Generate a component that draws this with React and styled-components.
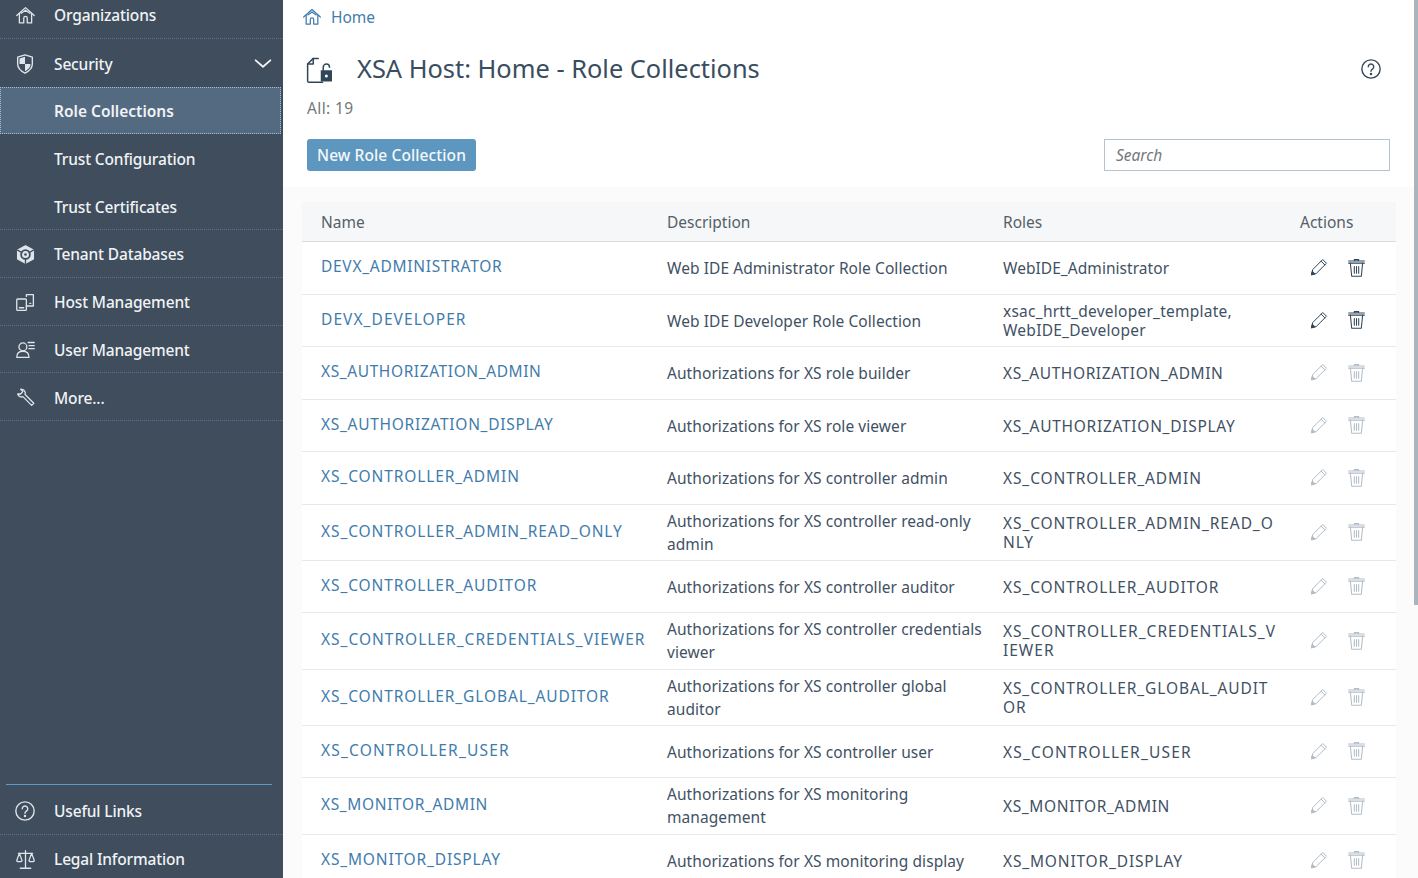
import styled, { createGlobalStyle } from "styled-components";

const GlobalStyle = createGlobalStyle`
  html, body { margin: 0; padding: 0; height: 100%; overflow: hidden; background: #fff; }
  body { font-family: "Noto Sans", "Open Sans", "Liberation Sans", sans-serif; }
`;

const Page = styled.div`
  display: flex;
  width: 1418px;
  height: 878px;
  overflow: hidden;
  position: relative;
`;

const Sidebar = styled.aside`
  width: 283px;
  flex: none;
  height: 878px;
  overflow: hidden;
  background: #3f4d5d;
  display: flex;
  flex-direction: column;
`;

const NavList = styled.nav`
  display: flex;
  flex-direction: column;
  margin-top: -9px;
  & > div { padding-top: 2px; }
`;

const NavItem = styled.div`
  height: 47.8px;
  flex: none;
  box-sizing: border-box;
  display: flex;
  align-items: center;
  padding: 0 9px 0 ${(p) => (p.$sub ? "54px" : "14px")};
  color: #f0f3f5;
  font-size: 15.5px;
  font-weight: ${(p) => (p.$active ? 600 : 500)};
  letter-spacing: ${(p) => (p.$active ? "0" : "-0.15px")};
  border-bottom: 1px ${(p) => (p.$plain ? "none" : "dotted")} #5d7186;
  background: ${(p) => (p.$active ? "#546a81" : "transparent")};
  outline: ${(p) => (p.$active ? "1px dotted #9fc0dc" : "none")};
  outline-offset: -1px;
  margin-right: ${(p) => (p.$active ? "2px" : "0")};
`;

const NavIcon = styled.span`
  width: 24px;
  height: 24px;
  margin-right: 16px;
  margin-left: -1px;
  display: flex;
  align-items: center;
  justify-content: center;
  color: #dfe5ea;
  flex: none;
  & + span { margin-left: 1px; }
`;

const NavLabel = styled.span`
  flex: 1;
`;

const NavFooter = styled.div`
  margin-top: auto;
  margin-bottom: -5px;
  display: flex;
  flex-direction: column;
`;

const FooterRule = styled.div`
  height: 1px;
  margin: 0 11px 2px 6px;
  background: #5a9bc9;
`;

const Main = styled.main`
  flex: 1;
  min-width: 0;
  height: 878px;
  display: flex;
  flex-direction: column;
  & > * { flex: none; }
`;

const Breadcrumb = styled.div`
  display: flex;
  align-items: center;
  height: 34px;
  padding-left: 19px;
  color: #427cac;
  font-size: 15.5px;
  gap: 9px;
`;

const TitleRow = styled.div`
  display: flex;
  align-items: center;
  height: 36px;
  margin-top: 17px;
  padding: 0 36px 0 19px;
  color: #32465a;
`;

const Title = styled.h1`
  margin: 0 0 2px 25px;
  flex: 1;
  font-size: 25.4px;
  font-weight: 400;
  color: #3a4d60;
`;

const Count = styled.div`
  margin: 9px 0 0 24px;
  height: 24px;
  line-height: 24px;
  color: #74777a;
  font-size: 15.5px;
  letter-spacing: 0.4px;
`;

const Toolbar = styled.div`
  display: flex;
  align-items: center;
  justify-content: space-between;
  margin-top: 19px;
  padding: 0 28px 0 24px;
  height: 32px;
`;

const PrimaryButton = styled.button`
  height: 32px;
  padding: 0;
  width: 169px;
  border: none;
  border-radius: 3px;
  background: #5d97bf;
  color: #f4f7f9;
  font: 500 15.5px "Noto Sans", sans-serif;
  letter-spacing: 0.1px;
  white-space: nowrap;
`;

const SearchBox = styled.div`
  box-sizing: border-box;
  width: 286px;
  height: 32px;
  border: 1px solid #b5c4d0;
  padding-left: 11px;
  display: flex;
  align-items: center;
  font-size: 15.5px;
  font-style: italic;
  color: #74777a;
`;

const TableArea = styled.section`
  margin-top: 16px;
  padding: 15px 22px 0 19px;
  background: #fbfbfb;
  font-size: 15.5px;
  color: #3f5164;
`;

const Row = styled.div`
  display: grid;
  grid-template-columns: 365px 336px 297px 1fr;
  height: ${(p) => p.$h}px;
  box-sizing: border-box;
  align-items: center;
  background: #fff;
  border-bottom: 1px solid #e6e8ea;
`;

const HeaderRow = styled(Row)`
  background: #f6f7f8;
  color: #555f69;
  border-bottom: 1px solid #d8dcdf;
`;

const Cell = styled.div`
  padding-left: ${(p) => (p.$first ? "19px" : "0")};
  line-height: ${(p) => p.$lh || 22}px;
  white-space: nowrap;
  letter-spacing: ${(p) => p.$sp || 0}px;
`;

const NameLink = styled.span`
  color: #3f7cac;
  position: relative;
  top: -2px;
`;

const Actions = styled.div`
  display: flex;
  align-items: center;
  gap: 17px;
  padding-left: 9px;
  margin-top: -2px;
  color: ${(p) => (p.$on ? "#32465a" : "#b2bdc7")};
`;

const Scrollbar = styled.div`
  position: absolute;
  top: 0;
  right: 0;
  width: 4px;
  height: 605px;
  background: #a9b4bc;
`;

const Svg = ({ size = 20, children, sw = 1.5 }) => (
  <svg width={size} height={size} viewBox="0 0 24 24" fill="none" stroke="currentColor" strokeWidth={sw} strokeLinecap="round" strokeLinejoin="round">
    {children}
  </svg>
);

const HomeIcon = ({ size }) => (
  <Svg size={size}>
    <path d="M2 12 12 3l10 9" />
    <path d="M5 10v10.500h5V15a2 2 0 0 1 4 0v5.500h5V10" />
    <path d="M7 9.500 12 6l5 3.500" />
  </Svg>
);

const ShieldIcon = () => (
  <Svg size={22}>
    <path d="M12 2 4 4.500V12c0 5 4 8 8 10 4-2 8-5 8-10V4.500z" />
    <path d="M12 4 6 6v6h6zM12 12h6c0 4-3 6.500-6 8z" fill="currentColor" stroke="none" />
  </Svg>
);

const TenantIcon = () => (
  <Svg size={21}>
    <path d="M12 2 21 7v10l-9 5-9-5V7z" fill="currentColor" />
    <circle cx="12" cy="12" r="5" stroke="#3f4d5d" strokeWidth="2" />
    <circle cx="12" cy="12" r="1.500" fill="#3f4d5d" stroke="none" />
    <path d="M3 7l5 3M21 7l-5 3M12 22v-5" stroke="#3f4d5d" />
  </Svg>
);

const HostIcon = () => (
  <Svg size={21}>
    <rect x="2" y="8" width="11" height="13" rx="1" />
    <path d="M13 5V3h8v13h-8M5 18h5M17 13h1" />
  </Svg>
);

const UserIcon = () => (
  <Svg size={21}>
    <circle cx="9" cy="9" r="4.500" />
    <path d="M2 21c0-5 3-7 7-7s7 2 7 7z" />
    <path d="M15 4h7M16 7.500h6M16 11h6" />
  </Svg>
);

const WrenchIcon = () => (
  <Svg size={21}>
    <path d="M3 8c1 3 4 4 6 3l10 10 2.500-2.500-10-10c1-3-1-6-5-6L9 5 6.500 8 3 8z" />
  </Svg>
);

const HelpIcon = ({ size = 22 }) => (
  <Svg size={size}>
    <circle cx="12" cy="12" r="10" />
    <path d="M9 9.500a3 3 0 1 1 4.500 2.600c-1 .6-1.500 1.200-1.500 2.400" />
    <circle cx="12" cy="17.500" r=".6" fill="currentColor" />
  </Svg>
);

const ScaleIcon = () => (
  <Svg size={21}>
    <path d="M12 2v19M6 22h12M4 5h16" />
    <path d="M5 5 2 13c0 2 6 2 6 0zM19 5l-3 8c0 2 6 2 6 0z" />
  </Svg>
);

const LockFileIcon = () => (
  <Svg size={30} sw={1.2}>
    <path d="M13 3.500H9L4.500 8v13.500c0 .5.500 1 1 1h11" />
    <path d="M9 3.500V8H4.500" />
    <path d="M15 13h9v9h-9z" fill="currentColor" stroke="none" />
    <path d="M17 13v-2.500a2.500 2.500 0 0 1 5 0" />
    <circle cx="19.500" cy="17.500" r="1.200" fill="#fff" stroke="none" />
  </Svg>
);

const PencilIcon = () => (
  <Svg size={20} sw={1.2}>
    <path d="M3 21l1.500-6L16.500 3l4.500 4.500L9 19.500z" />
    <path d="M3 21l1-4 3 3z" fill="currentColor" />
    <path d="M14.500 5l4.500 4.500" />
  </Svg>
);

const TrashIcon = () => (
  <Svg size={21} sw={1.2}>
    <path d="M3 4.500h18M3 7h18M9.500 4.500V3h5v1.500" />
    <path d="M5 7l1.500 15h11L19 7" />
    <path d="M9.500 11v7.500M12 11v7.500M14.500 11v7.500" />
  </Svg>
);

const rows = [
  { h: 53, name: "DEVX_ADMINISTRATOR", sp: 0.72, roleSp: 0.05, desc: "Web IDE Administrator Role Collection", roles: "WebIDE_Administrator", on: true },
  { h: 52, name: "DEVX_DEVELOPER", sp: 1.07, roleSp: 0.25, desc: "Web IDE Developer Role Collection", roles: ["xsac_hrtt_developer_template,", "WebIDE_Developer"], on: true },
  { h: 53, name: "XS_AUTHORIZATION_ADMIN", sp: 0.59, desc: "Authorizations for XS role builder", roles: "XS_AUTHORIZATION_ADMIN" },
  { h: 52, name: "XS_AUTHORIZATION_DISPLAY", sp: 0.71, desc: "Authorizations for XS role viewer", roles: "XS_AUTHORIZATION_DISPLAY" },
  { h: 53, name: "XS_CONTROLLER_ADMIN", sp: 0.89, desc: "Authorizations for XS controller admin", roles: "XS_CONTROLLER_ADMIN" },
  { h: 56, name: "XS_CONTROLLER_ADMIN_READ_ONLY", sp: 0.9, desc: ["Authorizations for XS controller read-only", "admin"], roles: ["XS_CONTROLLER_ADMIN_READ_O", "NLY"] },
  { h: 52, name: "XS_CONTROLLER_AUDITOR", sp: 0.9, desc: "Authorizations for XS controller auditor", roles: "XS_CONTROLLER_AUDITOR" },
  { h: 57, name: "XS_CONTROLLER_CREDENTIALS_VIEWER", sp: 1, desc: ["Authorizations for XS controller credentials", "viewer"], roles: ["XS_CONTROLLER_CREDENTIALS_V", "IEWER"] },
  { h: 56, name: "XS_CONTROLLER_GLOBAL_AUDITOR", sp: 0.89, desc: ["Authorizations for XS controller global", "auditor"], roles: ["XS_CONTROLLER_GLOBAL_AUDIT", "OR"] },
  { h: 52, name: "XS_CONTROLLER_USER", sp: 1.17, desc: "Authorizations for XS controller user", roles: "XS_CONTROLLER_USER" },
  { h: 57, name: "XS_MONITOR_ADMIN", sp: 0.63, desc: ["Authorizations for XS monitoring", "management"], roles: "XS_MONITOR_ADMIN" },
  { h: 52, name: "XS_MONITOR_DISPLAY", sp: 0.83, desc: "Authorizations for XS monitoring display", roles: "XS_MONITOR_DISPLAY" },
];

const Lines = ({ value, lh, sp }) =>
  Array.isArray(value) ? (
    <Cell $lh={lh} $sp={sp}>
      {value.map((line) => (
        <div key={line}>{line}</div>
      ))}
    </Cell>
  ) : (
    <Cell $sp={sp}>{value}</Cell>
  );

export default function App() {
  return (
    <Page>
      <GlobalStyle />
      <Sidebar>
        <NavList>
          <NavItem><NavIcon><HomeIcon size={21} /></NavIcon><NavLabel>Organizations</NavLabel></NavItem>
          <NavItem $plain>
            <NavIcon><ShieldIcon /></NavIcon>
            <NavLabel>Security</NavLabel>
            <Svg size={22} sw={2}><path d="M4 8l8 7 8-7" /></Svg>
          </NavItem>
          <NavItem $sub $active>Role Collections</NavItem>
          <NavItem $sub $plain>Trust Configuration</NavItem>
          <NavItem $sub>Trust Certificates</NavItem>
          <NavItem><NavIcon><TenantIcon /></NavIcon><NavLabel>Tenant Databases</NavLabel></NavItem>
          <NavItem><NavIcon><HostIcon /></NavIcon><NavLabel>Host Management</NavLabel></NavItem>
          <NavItem><NavIcon><UserIcon /></NavIcon><NavLabel>User Management</NavLabel></NavItem>
          <NavItem><NavIcon><WrenchIcon /></NavIcon><NavLabel>More...</NavLabel></NavItem>
        </NavList>
        <NavFooter>
          <FooterRule />
          <NavItem><NavIcon><HelpIcon /></NavIcon><NavLabel>Useful Links</NavLabel></NavItem>
          <NavItem $plain><NavIcon><ScaleIcon /></NavIcon><NavLabel>Legal Information</NavLabel></NavItem>
        </NavFooter>
      </Sidebar>
      <Main>
        <Breadcrumb><HomeIcon size={20} />Home</Breadcrumb>
        <TitleRow>
          <LockFileIcon />
          <Title>XSA Host: Home - Role Collections</Title>
          <HelpIcon />
        </TitleRow>
        <Count>All: 19</Count>
        <Toolbar>
          <PrimaryButton>New Role Collection</PrimaryButton>
          <SearchBox>Search</SearchBox>
        </Toolbar>
        <TableArea>
          <HeaderRow $h={40}>
            <Cell $first>Name</Cell>
            <Cell>Description</Cell>
            <Cell>Roles</Cell>
            <Cell>Actions</Cell>
          </HeaderRow>
          {rows.map((row) => (
            <Row key={row.name} $h={row.h}>
              <Cell $first $sp={row.sp}><NameLink>{row.name}</NameLink></Cell>
              <Lines value={row.desc} lh={23} sp={0.07} />
              <Lines value={row.roles} lh={19} sp={row.roleSp ?? row.sp} />
              <Actions $on={row.on}><PencilIcon /><TrashIcon /></Actions>
            </Row>
          ))}
        </TableArea>
      </Main>
      <Scrollbar />
    </Page>
  );
}
